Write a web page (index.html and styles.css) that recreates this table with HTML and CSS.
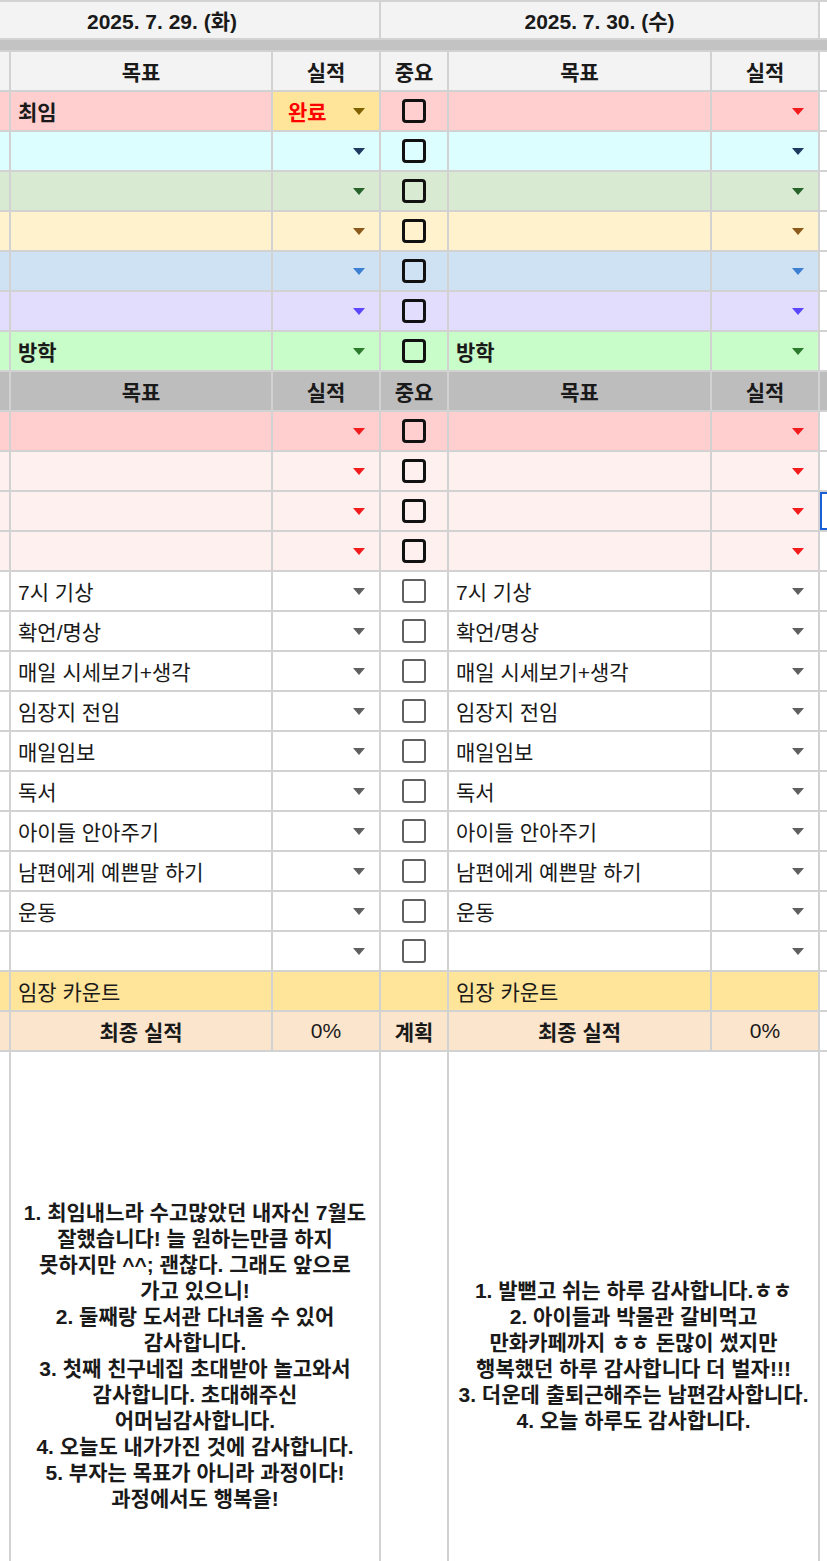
FILE: index.html
```html
<!DOCTYPE html>
<html lang="ko">
<head>
    <meta charset="UTF-8">
    <meta name="viewport" content="width=device-width, initial-scale=1.0">
    <title>일일 목표 시트</title>
    <link rel="stylesheet" href="styles.css">
</head>
<body>
    <div class="sheet">
        <!-- date heads -->
        <div class="row date">
            <div class="day-left">2025. 7. 29. (화)</div>
            <div class="day-right">2025. 7. 30. (수)</div>
            <div class="out"></div>
        </div>
        <div class="freeze"></div>

        <div class="row head">
            <div></div><div class="c">목표</div><div class="c">실적</div>
            <div class="c">중요</div><div class="c">목표</div><div class="c">실적</div>
            <div class="out"></div>
        </div>

        <div class="row r-red">
            <div></div><div class="goal b">최임</div>
            <div class="pick chip"><span class="done">완료</span><i class="arrow"></i></div>
            <div class="check"><span class="box"></span></div>
            <div class="goal"></div><div class="pick"><i class="arrow"></i></div>
            <div class="out"></div>
        </div>
        <div class="row r-cyan">
            <div></div><div class="goal"></div><div class="pick"><i class="arrow"></i></div>
            <div class="check"><span class="box"></span></div>
            <div class="goal"></div><div class="pick"><i class="arrow"></i></div>
            <div class="out"></div>
        </div>
        <div class="row r-sage">
            <div></div><div class="goal"></div><div class="pick"><i class="arrow"></i></div>
            <div class="check"><span class="box"></span></div>
            <div class="goal"></div><div class="pick"><i class="arrow"></i></div>
            <div class="out"></div>
        </div>
        <div class="row r-cream">
            <div></div><div class="goal"></div><div class="pick"><i class="arrow"></i></div>
            <div class="check"><span class="box"></span></div>
            <div class="goal"></div><div class="pick"><i class="arrow"></i></div>
            <div class="out"></div>
        </div>
        <div class="row r-blue">
            <div></div><div class="goal"></div><div class="pick"><i class="arrow"></i></div>
            <div class="check"><span class="box"></span></div>
            <div class="goal"></div><div class="pick"><i class="arrow"></i></div>
            <div class="out"></div>
        </div>
        <div class="row r-violet">
            <div></div><div class="goal"></div><div class="pick"><i class="arrow"></i></div>
            <div class="check"><span class="box"></span></div>
            <div class="goal"></div><div class="pick"><i class="arrow"></i></div>
            <div class="out"></div>
        </div>
        <div class="row r-green">
            <div></div><div class="goal b">방학</div><div class="pick"><i class="arrow"></i></div>
            <div class="check"><span class="box"></span></div>
            <div class="goal b">방학</div><div class="pick"><i class="arrow"></i></div>
            <div class="out"></div>
        </div>

        <div class="row head gray">
            <div></div><div class="c">목표</div><div class="c">실적</div>
            <div class="c">중요</div><div class="c">목표</div><div class="c">실적</div>
            <div class="out"></div>
        </div>

        <div class="row r-red">
            <div></div><div class="goal"></div><div class="pick"><i class="arrow"></i></div>
            <div class="check"><span class="box"></span></div>
            <div class="goal"></div><div class="pick"><i class="arrow"></i></div>
            <div class="out"></div>
        </div>
        <div class="row r-pink">
            <div></div><div class="goal"></div><div class="pick"><i class="arrow"></i></div>
            <div class="check"><span class="box"></span></div>
            <div class="goal"></div><div class="pick"><i class="arrow"></i></div>
            <div class="out"></div>
        </div>
        <div class="row r-pink">
            <div></div><div class="goal"></div><div class="pick"><i class="arrow"></i></div>
            <div class="check"><span class="box"></span></div>
            <div class="goal"></div><div class="pick"><i class="arrow"></i></div>
            <div class="out selected"></div>
        </div>
        <div class="row r-pink">
            <div></div><div class="goal"></div><div class="pick"><i class="arrow"></i></div>
            <div class="check"><span class="box"></span></div>
            <div class="goal"></div><div class="pick"><i class="arrow"></i></div>
            <div class="out"></div>
        </div>

        <div class="row plain">
            <div></div><div class="goal">7시 기상</div><div class="pick"><i class="arrow"></i></div>
            <div class="check"><span class="box"></span></div>
            <div class="goal">7시 기상</div><div class="pick"><i class="arrow"></i></div>
            <div class="out"></div>
        </div>
        <div class="row plain">
            <div></div><div class="goal">확언/명상</div><div class="pick"><i class="arrow"></i></div>
            <div class="check"><span class="box"></span></div>
            <div class="goal">확언/명상</div><div class="pick"><i class="arrow"></i></div>
            <div class="out"></div>
        </div>
        <div class="row plain">
            <div></div><div class="goal">매일 시세보기+생각</div><div class="pick"><i class="arrow"></i></div>
            <div class="check"><span class="box"></span></div>
            <div class="goal">매일 시세보기+생각</div><div class="pick"><i class="arrow"></i></div>
            <div class="out"></div>
        </div>
        <div class="row plain">
            <div></div><div class="goal">임장지 전임</div><div class="pick"><i class="arrow"></i></div>
            <div class="check"><span class="box"></span></div>
            <div class="goal">임장지 전임</div><div class="pick"><i class="arrow"></i></div>
            <div class="out"></div>
        </div>
        <div class="row plain">
            <div></div><div class="goal">매일임보</div><div class="pick"><i class="arrow"></i></div>
            <div class="check"><span class="box"></span></div>
            <div class="goal">매일임보</div><div class="pick"><i class="arrow"></i></div>
            <div class="out"></div>
        </div>
        <div class="row plain">
            <div></div><div class="goal">독서</div><div class="pick"><i class="arrow"></i></div>
            <div class="check"><span class="box"></span></div>
            <div class="goal">독서</div><div class="pick"><i class="arrow"></i></div>
            <div class="out"></div>
        </div>
        <div class="row plain">
            <div></div><div class="goal">아이들 안아주기</div><div class="pick"><i class="arrow"></i></div>
            <div class="check"><span class="box"></span></div>
            <div class="goal">아이들 안아주기</div><div class="pick"><i class="arrow"></i></div>
            <div class="out"></div>
        </div>
        <div class="row plain">
            <div></div><div class="goal">남편에게 예쁜말 하기</div><div class="pick"><i class="arrow"></i></div>
            <div class="check"><span class="box"></span></div>
            <div class="goal">남편에게 예쁜말 하기</div><div class="pick"><i class="arrow"></i></div>
            <div class="out"></div>
        </div>
        <div class="row plain">
            <div></div><div class="goal">운동</div><div class="pick"><i class="arrow"></i></div>
            <div class="check"><span class="box"></span></div>
            <div class="goal">운동</div><div class="pick"><i class="arrow"></i></div>
            <div class="out"></div>
        </div>
        <div class="row plain">
            <div></div><div class="goal"></div><div class="pick"><i class="arrow"></i></div>
            <div class="check"><span class="box"></span></div>
            <div class="goal"></div><div class="pick"><i class="arrow"></i></div>
            <div class="out"></div>
        </div>

        <div class="row count">
            <div></div><div class="goal">임장 카운트</div><div></div>
            <div></div>
            <div class="goal">임장 카운트</div><div></div>
            <div class="out"></div>
        </div>
        <div class="row total">
            <div></div><div class="c">최종 실적</div><div class="c num">0%</div>
            <div class="c">계획</div>
            <div class="c">최종 실적</div><div class="c num">0%</div>
            <div class="out"></div>
        </div>

        <div class="row notes">
            <div></div>
            <div class="note wide-left">
                1. 최임내느라 수고많았던 내자신 7월도<br>
                잘했습니다! 늘 원하는만큼 하지<br>
                못하지만 ^^; 괜찮다. 그래도 앞으로<br>
                가고 있으니!<br>
                2. 둘째랑 도서관 다녀올 수 있어<br>
                감사합니다.<br>
                3. 첫째 친구네집 초대받아 놀고와서<br>
                감사합니다. 초대해주신<br>
                어머님감사합니다.<br>
                4. 오늘도 내가가진 것에 감사합니다.<br>
                5. 부자는 목표가 아니라 과정이다!<br>
                과정에서도 행복을!
            </div>
            <div></div>
            <div class="note wide-right">
                1. 발뻗고 쉬는 하루 감사합니다.ㅎㅎ<br>
                2. 아이들과 박물관 갈비먹고<br>
                만화카페까지 ㅎㅎ 돈많이 썼지만<br>
                행복했던 하루 감사합니다 더 벌자!!!<br>
                3. 더운데 출퇴근해주는 남편감사합니다.<br>
                4. 오늘 하루도 감사합니다.
            </div>
            <div class="out"></div>
        </div>
    </div>
</body>
</html>
```

FILE: styles.css
```css
html, body {
    margin: 0;
    padding: 0;
    height: 1561px;
    overflow: hidden;
    background: #ffffff;
}

body {
    font-family: 'Liberation Sans', 'Noto Sans CJK KR', sans-serif;
    font-size: 21px;
    color: #1a1a1a;
}

.sheet {
    display: grid;
    grid-template-columns: 9px 260px 106px 66px 261px 106px 1fr;
    grid-template-rows: 36px 10px;
    grid-auto-rows: minmax(38px, auto);
    gap: 2px;
    padding-top: 2px;
    background: #d2d2d2;
}

.row {
    display: contents;
}

.row > div {
    background: #ffffff;
    display: flex;
    align-items: center;
    min-width: 0;
    overflow: hidden;
    white-space: nowrap;
}

/* date row */
.date > div {
    background: #f3f3f3;
    font-weight: bold;
    justify-content: center;
}

.day-left {
    grid-column: 1 / 4;
    padding-right: 55px;
}

.day-right {
    grid-column: 4 / 7;
}

.date .out {
    background: #ffffff;
}

.freeze {
    grid-column: 1 / -1;
    background: #c3c3c3;
}

/* headers */
.head > div {
    background: #f3f3f3;
    font-weight: bold;
}

.head.gray > div {
    background: #bdbdbd;
}

.row > .out,
.head > .out {
    background: #ffffff;
}

.c {
    justify-content: center;
}

.b {
    font-weight: bold;
}

.goal {
    padding-left: 7px;
}

/* dropdown cells */
.pick {
    justify-content: space-between;
    padding: 0 14px 0 15px;
}

.arrow {
    margin-left: auto;
    width: 0;
    height: 0;
    border-left: 6px solid transparent;
    border-right: 6px solid transparent;
    border-top: 7px solid var(--arrow, #5f5f5f);
}

.chip {
    background: #ffe599 !important;
    --arrow: #7f6000 !important;
}

.done {
    color: #ff0000;
    font-weight: bold;
}

/* checkboxes */
.check {
    justify-content: center;
}

.box {
    width: 18px;
    height: 18px;
    border: 3px solid #111111;
    border-radius: 4px;
}

.plain .box {
    width: 20px;
    height: 20px;
    border: 2px solid #606060;
    border-radius: 3px;
}

/* row colours */
.r-red > div { background: #ffcfcf; }
.r-red { --arrow: #f21c1c; }

.r-cyan > div { background: #dcfefe; }
.r-cyan { --arrow: #1f3a60; }

.r-sage > div { background: #d9ead3; }
.r-sage { --arrow: #27632a; }

.r-cream > div { background: #fff2cc; }
.r-cream { --arrow: #8b5a1c; }

.r-blue > div { background: #cfe2f3; }
.r-blue { --arrow: #3d7fd0; }

.r-violet > div { background: #e2dcfd; }
.r-violet { --arrow: #5a47ff; }

.r-green > div { background: #c8fcc8; }
.r-green { --arrow: #2c7a2c; }

.r-pink > div { background: #fff0f0; }
.r-pink { --arrow: #f21c1c; }

.count > div { background: #ffe599; }

.total > div {
    background: #fce5cd;
    font-weight: bold;
}

.total > .num {
    font-weight: normal;
}

.selected {
    box-shadow: inset 2px 0 0 #1a5fd6, inset 0 2px 0 #1a5fd6, inset 0 -2px 0 #1a5fd6;
}

/* notes row */
.notes > div {
    height: 511px;
}

.note {
    justify-content: center;
    text-align: center;
    font-weight: bold;
    line-height: 26px;
    padding-top: 97px;
    box-sizing: border-box;
}

.wide-left {
    grid-column: 2 / 4;
}

.wide-right {
    grid-column: 5 / 7;
}
```
